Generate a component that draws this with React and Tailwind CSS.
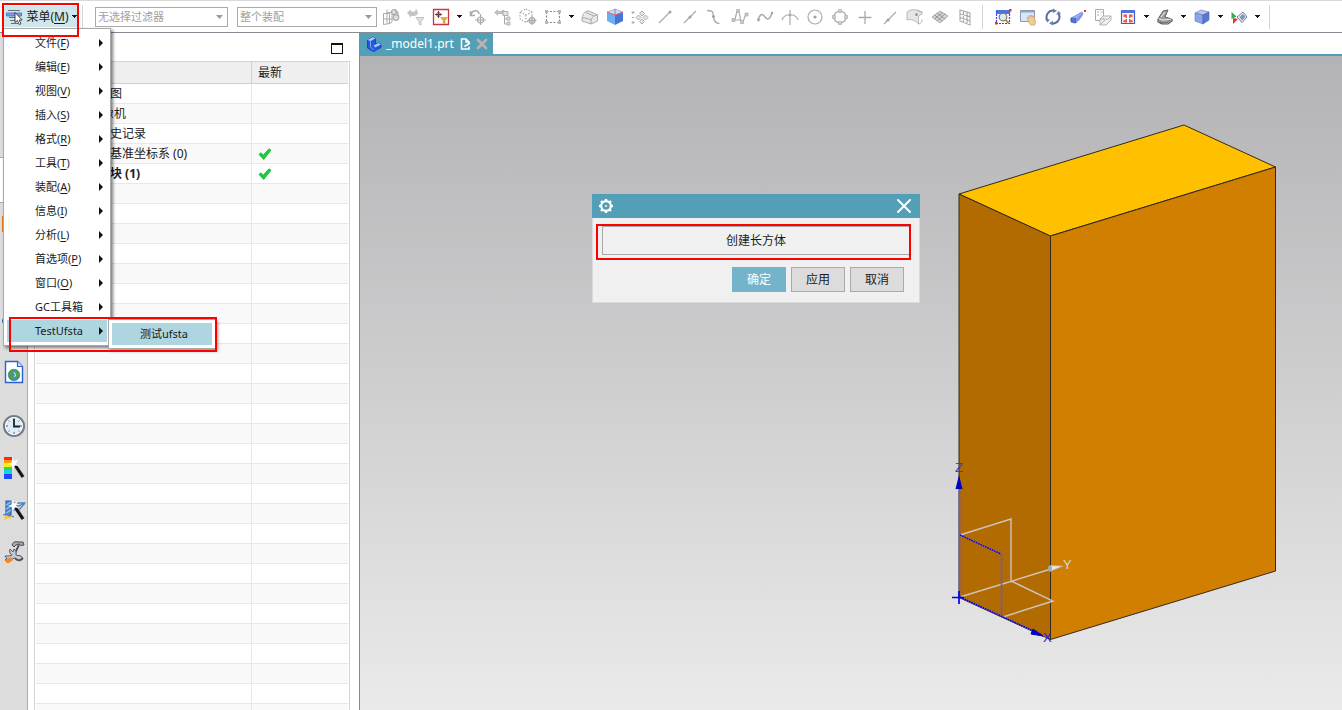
import { useState } from "react";
import { X } from "lucide-react";

const menuItems = [
  { label: "文件", hotkey: "F" },
  { label: "编辑", hotkey: "E" },
  { label: "视图", hotkey: "V" },
  { label: "插入", hotkey: "S" },
  { label: "格式", hotkey: "R" },
  { label: "工具", hotkey: "T" },
  { label: "装配", hotkey: "A" },
  { label: "信息", hotkey: "I" },
  { label: "分析", hotkey: "L" },
  { label: "首选项", hotkey: "P" },
  { label: "窗口", hotkey: "O" },
  { label: "GC工具箱" },
  { label: "TestUfsta", submenu: ["测试ufsta"] },
];

const treeRows = [
  { name: "图", indent: "pl-[74px]" },
  { name: "像机", indent: "pl-[66px]" },
  { name: "史记录", indent: "pl-[74px]" },
  { name: "基准坐标系 (0)", indent: "pl-[74px]", latest: true },
  { name: "块 (1)", indent: "pl-[74px]", latest: true, bold: true },
];

const EMPTY_ROWS = 27;

const Icon = ({ children, className = "w-[18px] h-[18px]", box = "0 0 18 18" }) => (
  <svg viewBox={box} className={`shrink-0 ${className}`} fill="none" stroke="#aaaaaa" strokeWidth="1.2">
    {children}
  </svg>
);

const Caret = () => (
  <svg viewBox="0 0 6 3" className="w-[6px] h-[3px] shrink-0" shapeRendering="crispEdges">
    <path d="M0 0h6L3 3z" fill="#1a1a1a" />
  </svg>
);

const MenuIcon = () => (
  <Icon>
    <path d="M2 2.500h12M3 9.500h8M4 12.500h7M5 15.500h7" stroke="#6b6f73" />
    <path d="M.5 5h15v3H.5z" fill="#7fa0f0" stroke="#3c63cf" strokeWidth=".8" />
    <path d="M9 4.500v10l2.400-2 1.800 4 1.800-.8-1.800-3.700h3z" fill="#fff" stroke="#333" strokeWidth=".9" />
  </Icon>
);

const GridLinkIcon = () => (
  <Icon>
    <path d="M1.500 5.500h6v10l-6 1zM1.500 11h9M5 1.500v14M5 5l5-1v10l-3 2" strokeWidth="1" />
    <circle cx="12" cy="4" r="2.500" fill="#ddd" />
    <circle cx="14" cy="9.500" r="2.800" fill="#ddd" />
    <path d="M13 2l3 2.500v3" />
  </Icon>
);

const UndoFilterIcon = () => (
  <Icon>
    <path d="M0 4.500l4-3v2h4l1-3 2 4c0 2-2 3.500-4 3.500H4V10z" fill="#c4c4c4" stroke="none" />
    <path d="M9 9.500h8l-3 4V17l-2-1v-2.500z" fill="#e0e0e0" stroke="#c4c4c4" strokeWidth="1" />
  </Icon>
);

const SnapFilterIcon = () => (
  <Icon>
    <path d="M1.500 1.500h15v15h-15z" fill="#fff" stroke="#c8344a" strokeWidth="1.300" />
    <path d="M6.500 3v7M3 6.500h7" stroke="#444" strokeWidth="1" />
    <circle cx="6.500" cy="6.500" r="2" stroke="#a33" strokeWidth=".9" />
    <path d="M8.500 9.500h7l-2.500 3V16l-1.800-1v-2.500z" fill="#f0a62d" stroke="#d58a1b" strokeWidth=".5" />
  </Icon>
);

const RotatePointIcon = () => (
  <Icon>
    <path d="M1.500 3v4.500H6M2 7C3 2 9.500 1 10 6" strokeWidth="1.600" />
    <path d="M11.500 6v11M6 12h11" />
    <circle cx="11.500" cy="12" r="3" />
  </Icon>
);

const TreeIcon = () => (
  <Icon>
    <path d="M0 4.500l4-3.500v2h3l2-1.500L12 4v3H8V6H4v2z" fill="#c0c0c0" stroke="none" />
    <path d="M10.500 8v8h3M10.500 11h3" strokeWidth="1" />
    <path d="M9 3.500h5v4H9zM13 9h3v3h-3zM13 14h3v3h-3z" fill="#e3e3e3" strokeWidth=".9" />
  </Icon>
);

const HexPointIcon = () => (
  <Icon>
    <path d="M7 1l6 3v7l-6 3.500L1 11V4zM1 4l6 3 6-3M7 7v7" stroke="#949494" strokeDasharray="1.500 1.500" strokeWidth="1" />
    <circle cx="13" cy="12.500" r="3" fill="#ddd" />
    <path d="M13 8v9M8.500 12.500h9" />
  </Icon>
);

const RectSelectIcon = () => (
  <Icon>
    <path d="M2.500 3.500h13v11h-13z" stroke="#888" strokeDasharray="2 1.500" />
    <path d="M1 2h3v3H1zM14 2h3v3h-3zM1 13h3v3H1zM14 13h3v3h-3z" fill="#b8b8b8" stroke="none" />
  </Icon>
);

const RoundedBodyIcon = () => (
  <Icon>
    <path d="M1 10c1-5 4-7.500 7-7l8.500 4v6L10 16l-9-3z" fill="#e9e9e9" strokeWidth="1" />
    <path d="M10 16v-4c1-3 3-4.500 6.500-5M1 10c3-.5 7 1 9 2M5 4.500L13 8" strokeWidth="1" />
  </Icon>
);

const SolidCubeIcon = () => (
  <Icon>
    <path d="M1 4l8-3 8 3-8 3z" fill="#c5ddf7" stroke="#7b9bd4" strokeWidth=".6" />
    <path d="M1 4l8 3v10l-8-4z" fill="#68b0ef" stroke="none" />
    <path d="M9 7l8-3v9l-8 4z" fill="#4a74d6" stroke="none" />
    <path d="M1 4l8 3 8-3M9 7V1" stroke="#d96b7c" strokeWidth="1" />
  </Icon>
);

const DiamondsIcon = () => (
  <Icon>
    <path d="M11 3l2.500 2.500L11 8 8.500 5.500zM11 11l2.500 2.500L11 16l-2.500-2.500zM5 9.500L7.500 7 10 9.500 7.500 12zM12 9.500L14.500 7 17 9.500 14.500 12z" strokeWidth="1" fill="#e8e8e8" />
    <path d="M2 3v3M.5 4.500h3M2 13v3M.5 14.500h3M1 9.500h2" strokeWidth="1" />
  </Icon>
);

const LineEndIcon = () => (
  <Icon>
    <path d="M3 15L14 4" />
    <circle cx="14" cy="4" r="1.500" fill="#a3a3a3" stroke="none" />
  </Icon>
);

const LineMidIcon = () => (
  <Icon>
    <path d="M3 15L15 3" />
    <circle cx="9" cy="9" r="1.500" fill="#a3a3a3" stroke="none" />
  </Icon>
);

const TangentIcon = () => (
  <Icon>
    <path d="M1 2.500c8 0 5.500 3 6.500 7 .8 4 2 6 6 6" strokeWidth="1.300" />
    <circle cx="7.500" cy="8.500" r="1.500" fill="#a3a3a3" stroke="none" />
  </Icon>
);

const SplineIcon = () => (
  <Icon>
    <path d="M2.500 12c3 0 2-9 4.500-9s1.500 11 4 11 2-7 4.500-7.500M2.500 12h7" />
    <path d="M1 10.500h3v3H1zM5.500 1.500h3v3h-3zM9.500 12.500h3v3h-3zM14 5h3v3h-3z" fill="#c8c8c8" strokeWidth=".7" />
  </Icon>
);

const WaveIcon = () => (
  <Icon>
    <path d="M2 12c2-6 4-7 7-3s5 2 7-4" strokeWidth="1.500" />
    <circle cx="2.500" cy="12" r="1.400" fill="#a3a3a3" stroke="none" />
    <circle cx="16" cy="5" r="1.200" fill="#a3a3a3" stroke="none" />
  </Icon>
);

const ArcCrossIcon = () => (
  <Icon>
    <path d="M1 12c2-7 14-7 16 0M9 2v15" />
    <circle cx="9" cy="7" r="1.300" fill="#a3a3a3" stroke="none" />
  </Icon>
);

const CenterIcon = () => (
  <Icon>
    <circle cx="9" cy="9" r="7" />
    <circle cx="9" cy="9" r="1.600" fill="#a3a3a3" stroke="none" />
  </Icon>
);

const QuadrantIcon = () => (
  <Icon>
    <circle cx="9" cy="9" r="6" />
    <path d="M7.500 1.500h3v3h-3zM7.500 13.500h3v3h-3zM1.500 7.500h3v3h-3zM13.500 7.500h3v3h-3z" fill="#d0d0d0" strokeWidth=".7" />
  </Icon>
);

const PlusIcon = () => (
  <Icon>
    <path d="M9 3v13M2.500 9.500h13" strokeWidth="1.300" />
  </Icon>
);

const LinePointIcon = () => (
  <Icon>
    <path d="M3 16L15 4" />
    <circle cx="7" cy="12" r="1.600" fill="#a3a3a3" stroke="none" />
  </Icon>
);

const FaceIcon = () => (
  <Icon>
    <path d="M1 4c4-3 8-2 10-2l5 2v2c-3 1-4 3-3.500 6v4C9 12 5 11 1 12z" fill="#e6e6e6" strokeWidth=".8" />
    <path d="M11 2c2 2 3 2 5 2M12.500 16c3 0 3.500-3 3.500-5" strokeWidth=".8" />
    <circle cx="10.500" cy="6.500" r="1.500" fill="#999" stroke="none" />
  </Icon>
);

const MeshIcon = () => (
  <Icon>
    <path d="M1 9l8-6 8 5-8 7z" fill="#d6d6d6" strokeWidth="1" />
    <path d="M3.500 7l8 6M6 5l8 6M3.500 11l8-6.500M6 13l8-7" stroke="#969696" strokeWidth="1" />
  </Icon>
);

const SlantGridIcon = () => (
  <Icon>
    <path d="M4 2l10 3v12L4 13zM7.500 3v11.500M11 4v12M4 5.800l10 3M4 9.500l10 3.500" strokeWidth="1.100" />
  </Icon>
);

const ZoomWindowIcon = () => (
  <Icon>
    <path d="M2 2h14v4H2z" fill="#4f74d9" stroke="none" />
    <path d="M2.500 3v12.500h13V4" stroke="#3347ff" strokeDasharray="2 1" />
    <circle cx="9" cy="9" r="3.800" fill="#dceaf2" stroke="#777" />
    <path d="M11.500 12l3.500 3.500" stroke="#b98a42" strokeWidth="2" />
    <path d="M1 14h2.500v2.500H1zM15 1h2.500v2.500H15z" fill="#e02f37" stroke="none" />
  </Icon>
);

const PanIcon = () => (
  <Icon>
    <path d="M1.500 2.500h14v11h-14z" fill="#dbe6f5" stroke="#8b97ad" strokeWidth="1" />
    <path d="M2 3h13v1.500H2z" fill="#8ca4dc" stroke="none" />
    <path d="M8 9l2 1 .3-3 1.500 2 1-2 .8 2 1.500-1 .5 3 1 3-1 3h-4l-2-3z" fill="#efcb98" stroke="#c59e66" strokeWidth=".7" />
  </Icon>
);

const RotateIcon = () => (
  <Icon>
    <path d="M3.500 12.500A6.500 6.500 0 0 1 10 2.700M14.500 5.500A6.500 6.500 0 0 1 8 15.300" stroke="#5a6ca2" strokeWidth="2" />
    <path d="M9 .5l4 2.500-4 2zM9 12.800l-4 2.500 4 2.200zM1 11l5 .5-2.500 3zM12 6.500l2.500-3.500 2.500 3z" fill="#6a7eb4" stroke="none" />
  </Icon>
);

const PerspectiveIcon = () => (
  <Icon>
    <path d="M2 10l4-2 7-4 1 2-4 6-4 3-4-1z" fill="#9db2f2" stroke="#5f79cc" strokeWidth=".7" />
    <path d="M2 10l5 .5v4.500l-5-1.500z" fill="#5674d2" stroke="#3f5ab4" strokeWidth=".7" />
    <path d="M7 10.500L13.500 5v2L7 15z" fill="#7d98e6" stroke="none" />
    <path d="M15 2h2v2h-2z" fill="#e02f37" stroke="none" />
  </Icon>
);

const SheetIcon = () => (
  <Icon>
    <path d="M1.500 1.500h8v11h-8zM3 4h2M6.500 4h2M3 7h2M6.500 7h1" strokeWidth="1" />
    <path d="M6 11l3-3h8l-3 3zM6 11v6h6l5-5V8M6 17l5-5" fill="#eee" strokeWidth=".9" />
  </Icon>
);

const FitIcon = () => (
  <Icon>
    <path d="M2.500 2.500h13v13h-13z" fill="#f4f7ff" stroke="#4460bd" />
    <path d="M2 2h14v3H2z" fill="#4f74d9" stroke="none" />
    <path d="M4.500 6.500H8V10H7L5.500 8.500l-1 1zM10 6.500h3.500v3l-1-1L11 10h-1zM4.500 14.500v-3l1 1L7 11h1v3.500zM13.500 14.500v-3l-1 1L11 11h-1v3.500z" fill="#ee5440" stroke="none" />
  </Icon>
);

const SectionIcon = () => (
  <Icon>
    <path d="M2 11L7 3l5-1-3 7 7 2-5 4H5z" fill="#9a9f9f" stroke="#555" strokeWidth=".9" />
    <path d="M2 11l5 1 9-1M5 9l4-5" stroke="#eee" strokeWidth="1" />
    <path d="M2 11v3l4 2h6l4-3v-2" stroke="#555" />
  </Icon>
);

const ShadedCubeIcon = () => (
  <Icon>
    <path d="M2 5l6-3 8 2-6 3z" fill="#b8c9f6" stroke="#6074b8" strokeWidth=".6" />
    <path d="M2 5l8 2v9l-8-3z" fill="#8ba4ec" stroke="#6074b8" strokeWidth=".6" />
    <path d="M10 7l6-3v8l-6 4z" fill="#5a78ce" stroke="#4c62aa" strokeWidth=".6" />
  </Icon>
);

const OrientIcon = () => (
  <Icon>
    <path d="M1.500 4l5 4.500-5 2.500z" fill="#2bb24c" stroke="none" />
    <path d="M3 10l5 1-5 5z" fill="#e2372f" stroke="none" />
    <path d="M7 9l6-5 4 5-5 5.500z" fill="#e3e8f2" stroke="#68779a" strokeWidth=".9" />
    <path d="M13 6l2.500 3-3.500 3.500L9.500 9z" fill="#8195bb" stroke="none" />
  </Icon>
);

const snapTools = [
  { name: "关联", icon: GridLinkIcon },
  { name: "重置过滤器", icon: UndoFilterIcon },
  { name: "捕捉过滤器", icon: SnapFilterIcon, caret: true },
  { name: "旋转点", icon: RotatePointIcon },
  { name: "结构", icon: TreeIcon },
  { name: "高亮", icon: HexPointIcon },
  { name: "矩形选择", icon: RectSelectIcon, caret: true },
  { name: "圆角体", icon: RoundedBodyIcon },
  { name: "实体", icon: SolidCubeIcon },
  { name: "捕捉点", icon: DiamondsIcon },
  { name: "端点", icon: LineEndIcon },
  { name: "中点", icon: LineMidIcon },
  { name: "相切", icon: TangentIcon },
  { name: "控制点", icon: SplineIcon },
  { name: "极点", icon: WaveIcon },
  { name: "交点", icon: ArcCrossIcon },
  { name: "圆心", icon: CenterIcon },
  { name: "象限点", icon: QuadrantIcon },
  { name: "现有点", icon: PlusIcon },
  { name: "曲线上的点", icon: LinePointIcon },
  { name: "面上的点", icon: FaceIcon },
  { name: "小平面", icon: MeshIcon },
  { name: "栅格", icon: SlantGridIcon },
];

const viewTools = [
  { name: "缩放", icon: ZoomWindowIcon },
  { name: "平移", icon: PanIcon },
  { name: "旋转", icon: RotateIcon },
  { name: "透视", icon: PerspectiveIcon },
  { name: "图纸", icon: SheetIcon },
  { name: "适合窗口", icon: FitIcon, caret: true },
  { name: "剖切", icon: SectionIcon, caret: true },
  { name: "着色", icon: ShadedCubeIcon, caret: true },
  { name: "定向视图", icon: OrientIcon, caret: true },
];

const ToolGroup = ({ tools }) => (
  <div className="flex items-center shrink-0">
    {tools.map((tool) => {
      const ToolIcon = tool.icon;

      return (
        <div key={tool.name} className="flex items-center">
          <button aria-label={tool.name} className="w-[25px] h-6 flex items-center justify-center">
            <ToolIcon />
          </button>
          {tool.caret && (
            <button aria-label={`${tool.name}选项`} className="w-3 h-6 flex items-center justify-center">
              <Caret />
            </button>
          )}
        </div>
      );
    })}
  </div>
);

const FilterSelect = ({ label, option, width }) => (
  <label className={`relative flex shrink-0 ${width}`}>
    <select
      aria-label={label}
      className="appearance-none w-full h-5 pl-[2px] pr-5 border border-[#ababab] bg-white text-[11px] leading-4 text-[#a0a0a0] outline-none"
    >
      <option>{option}</option>
    </select>
    <span className="absolute right-[5px] top-2 pointer-events-none">
      <svg viewBox="0 0 7 4" className="w-[7px] h-1">
        <path d="M0 0h7L3.500 4z" fill="#9a9a9a" />
      </svg>
    </span>
  </label>
);

const Divider = () => <div className="w-px h-6 shrink-0 bg-[#d4d4d4]" />;

const MainMenu = () => (
  <ul className="absolute left-[3px] top-7 z-20 w-[108px] py-[2px] px-[3px] bg-white border border-[#a9a9a9] shadow-[2px_2px_3px_rgba(0,0,0,0.5)] text-[11px]">
    {menuItems.map((item) => (
      <li key={item.label} className="relative py-px">
        <button
          className={`w-full h-[22px] pl-7 pr-1 flex items-center justify-between whitespace-nowrap ${
            item.submenu ? "bg-[#aed6e1]" : ""
          }`}
        >
          <span>
            {item.label}
            {item.hotkey && (
              <>
                (<u className="underline-offset-2">{item.hotkey}</u>)
              </>
            )}
          </span>
          <svg viewBox="0 0 4 8" className="w-1 h-2">
            <path d="M0 0l4 4-4 4z" fill="#111" />
          </svg>
        </button>

        {item.submenu && (
          <>
            <ul className="absolute left-[101px] top-0 w-[108px] p-[3px] bg-white border border-[#a9a9a9] shadow-[2px_2px_3px_rgba(0,0,0,0.4)]">
              {item.submenu.map((entry) => (
                <li key={entry}>
                  <button className="w-full h-[22px] pl-7 text-left bg-[#aed6e1]">{entry}</button>
                </li>
              ))}
            </ul>
            <div className="absolute left-[2px] -top-[2px] w-[208px] h-[35px] border-2 border-[#f00] pointer-events-none" />
          </>
        )}
      </li>
    ))}
  </ul>
);

const Toolbar = () => (
  <header className="relative h-[33px] shrink-0 flex items-center border-t border-t-[#d9d9d9] border-b border-b-[#858c94] bg-white">
    <div className="relative ml-[3px] shrink-0">
      <button className="w-[75px] h-[21px] pl-[3px] pr-[1px] flex items-center justify-between bg-[#cfe6eb] text-[12px]">
        <MenuIcon />
        <span className="whitespace-nowrap">
          菜单(<u className="underline-offset-2">M</u>)
        </span>
        <Caret />
      </button>
      <div className="absolute -left-px -top-[3px] z-30 w-[77px] h-[34px] border-2 border-[#f00] pointer-events-none" />
    </div>
    <div className="ml-1 mr-3 flex">
      <Divider />
    </div>
    <FilterSelect label="类型过滤器" option="无选择过滤器" width="w-[133px]" />
    <div className="w-[9px] shrink-0" />
    <FilterSelect label="选择范围" option="整个装配" width="w-[140px]" />
    <div className="pl-px">
      <ToolGroup tools={snapTools} />
    </div>
    <div className="ml-[5px] mr-[7px]">
      <Divider />
    </div>
    <ToolGroup tools={viewTools} />
    <div className="ml-[6px]">
      <Divider />
    </div>
  </header>
);

const WebPageIcon = () => (
  <Icon className="w-6 h-6" box="0 0 24 24">
    <path d="M3.500 1.500h12l5 5v16h-17z" fill="#fff" stroke="#2f62c8" strokeWidth="1.400" />
    <path d="M15.500 1.500v5h5" fill="#d5e4fb" stroke="#2f62c8" />
    <circle cx="12" cy="15" r="5.800" fill="#3f8fd0" stroke="#2b6eb0" strokeWidth=".6" />
    <path d="M7 12c2-3 5-3 5-1l-2 3 2 4-2 2c-3-1-4-5-3-8zM13 10c3 0 4.500 3 4 5l-2 4-2-2z" fill="#4fa23c" stroke="none" />
    <path d="M12 12l1.500 3-1 2" stroke="#e3f1fb" strokeWidth="1" />
  </Icon>
);

const ClockIcon = () => (
  <Icon className="w-6 h-6" box="0 0 24 24">
    <circle cx="12" cy="12" r="10" fill="#ddecf8" stroke="#777d84" strokeWidth="2.200" />
    <circle cx="12" cy="12" r="8.400" stroke="#fff" strokeWidth="1" />
    <path d="M12 4v2M12 18v2M4 12h2M18 12h2M6.500 6.500l1 1M17.500 6.500l-1 1M6.500 17.500l1-1M17.500 17.500l-1-1" stroke="#55606e" strokeWidth="1" />
    <path d="M12 5v7.500h6" stroke="#1c222b" strokeWidth="1.800" />
  </Icon>
);

const Wand = () => (
  <>
    <path d="M13 9l8 12" stroke="#999" strokeWidth="4" />
    <path d="M13 9l8 12" stroke="#111" strokeWidth="2.800" />
    <path d="M11 1l1 4.500L16 3l-2 4.500 2.500 2.500-3.500-.5-2.500 4-.5-4.500L6 8l3.500-1.500z" fill="#fff" stroke="none" />
  </>
);

const PaletteIcon = () => (
  <Icon className="w-6 h-6" box="0 0 24 24">
    <g stroke="none">
      <path d="M2 1h8v4H2z" fill="#ff2618" />
      <path d="M2 4h8v4H2z" fill="#ff9a00" />
      <path d="M2 7h8v4H2z" fill="#f5ee17" />
      <path d="M2 11h8v4H2z" fill="#31dc37" />
      <path d="M2 14h8v4H2z" fill="#17cfe6" />
      <path d="M2 18h8v5H2z" fill="#1d49ff" />
    </g>
    <Wand />
  </Icon>
);

const ModelWandIcon = () => (
  <Icon className="w-6 h-6" box="0 0 24 24">
    <path d="M4 3h5v15H4z" fill="#4b87d1" stroke="#2e62a8" />
    <path d="M4 7l5-3M4 11l5-3M4 15l5-3" stroke="#9cc2f0" />
    <path d="M10 5h12l-5 3h-6M9 12h7M17 12l6-7" stroke="#5583bf" strokeWidth="1.300" />
    <path d="M1 17l3-1 8 3" stroke="#5583bf" strokeWidth="1.200" />
    <path d="M2 19l3-2 2 2 3-2-1 4-3-1-3 2z" fill="#f5c934" stroke="none" />
    <Wand />
  </Icon>
);

const ToolsIcon = () => (
  <Icon className="w-6 h-6" box="0 0 24 24">
    <path d="M10 5c1-3 3-4 6-3l5 0 1 3-3 .5-2-1.500-3 1-2 2z" fill="#a5a8ae" stroke="#3d3f44" strokeWidth=".9" />
    <path d="M17 5l-4 8" stroke="#4a4c50" strokeWidth="1.800" />
    <path d="M8 9c-1 3 0 5 2 6l-3 1-4 0 2 3-2 1 5 1 4-3 6 3 3-2-2-3-5-1 0-4-2-2-1 3z" fill="#c3c8d3" stroke="#555d6b" strokeWidth="1" />
    <path d="M13 18c2 3 5 3 8 0" stroke="#444a58" strokeWidth="1.600" />
    <path d="M4 19.500l5-2.500 2 3-4 3H4z" fill="#f28a1c" stroke="none" />
  </Icon>
);

const resourceTabs = [
  { name: "Web 浏览器", icon: WebPageIcon },
  { name: "历史记录", icon: ClockIcon },
  { name: "系统材料", icon: PaletteIcon },
  { name: "加工向导", icon: ModelWandIcon },
  { name: "角色", icon: ToolsIcon },
];

const ResourceBar = () => (
  <nav className="w-7 shrink-0 flex flex-col bg-[#dcdcdc] border-r border-[#ababab]">
    <div className="h-[124px] shrink-0" />
    <button aria-label="装配导航器" className="h-[46px] shrink-0 bg-white border-y border-[#ababab]" />
    <button aria-label="部件导航器" className="h-[42px] shrink-0 pl-[2px] flex items-center">
      <span className="w-3 h-4 bg-[#e3771e]" />
    </button>
    <button aria-label="重用库" className="h-[115px] shrink-0 pl-[2px] pb-9 flex items-end">
      <span className="w-2 h-[6px] rounded-full bg-[#2f62c8]" />
    </button>
    <div className="flex flex-col gap-[18px]">
      {resourceTabs.map((tab, index) => {
        const TabIcon = tab.icon;

        return (
          <button
            key={tab.name}
            aria-label={tab.name}
            className={`w-full h-6 flex items-center justify-center ${index === 0 ? "mb-3" : ""}`}
          >
            <TabIcon />
          </button>
        );
      })}
    </div>
  </nav>
);

const Check = () => (
  <svg viewBox="0 0 14 12" className="w-[14px] h-3">
    <path d="M1 6.500l2-1.800 2.200 2.500L11 .8l2 1.400-7.300 9.300z" fill="#17d03b" stroke="#0fa52e" strokeWidth=".7" />
  </svg>
);

const PartNavigator = () => (
  <aside className="w-[332px] shrink-0 pl-[6px] pr-[9px] flex flex-col bg-white border-r border-[#858c94]">
    <div className="h-7 shrink-0 flex items-center justify-end pr-[7px] pt-[3px]">
      <button aria-label="最大化" className="w-3 h-[11px] border border-t-2 border-[#111]" />
    </div>
    <div className="flex-1 min-h-0 overflow-hidden border border-[#d4d4d4] border-b-0 px-px">
      <table className="w-full table-fixed border-separate border-spacing-0 text-[12px] leading-4">
        <thead>
          <tr className="h-[22px] bg-[#efefef]">
            <th aria-label="名称" className="p-0 border-b border-r border-[#d0d0d0]" />
            <th className="w-24 p-0 pt-px pl-[6px] text-left font-normal border-b border-[#d0d0d0]">最新</th>
          </tr>
        </thead>
        <tbody>
          {treeRows.map((row) => (
            <tr key={row.name} className="h-5 even:bg-[#f9f9f9]">
              <td
                className={`p-0 border-b border-r border-[#e8e8e8] whitespace-nowrap ${row.indent} ${
                  row.bold ? "font-bold" : ""
                }`}
              >
                {row.name}
              </td>
              <td className="p-0 pl-[6px] border-b border-[#e8e8e8]">{row.latest && <Check />}</td>
            </tr>
          ))}
          {Array.from({ length: EMPTY_ROWS }, (_, i) => (
            <tr key={i} className="h-5 even:bg-[#f9f9f9]">
              <td className="p-0 border-b border-r border-[#e8e8e8]" />
              <td className="p-0 border-b border-[#e8e8e8]" />
            </tr>
          ))}
        </tbody>
      </table>
    </div>
  </aside>
);

const PartIcon = () => (
  <svg viewBox="0 0 16 16" className="w-4 h-4">
    <path d="M1.500 4l5-3 3 1.500V8l3-1 2.500 1.500v3l-7.500 4L1.500 12z" fill="#2457e0" stroke="#123aa8" strokeWidth=".8" />
    <path d="M1.500 4l5-3 3 1.500-5 2.500zM7.500 9.500l5-2.500 2.500 1.500-6 3z" fill="#a5c8ff" />
    <path d="M4.500 5v6l3 3" stroke="#7ea8ff" strokeWidth="1" fill="none" />
  </svg>
);

const FileTabs = () => (
  <div className="h-[23px] shrink-0 flex bg-white border-b-2 border-[#549fb8]">
    <div className="w-[133px] pl-[6px] flex items-center bg-[#549fb8] text-white">
      <PartIcon />
      <span className="ml-1 text-[12px] leading-4">_model1.prt</span>
      <svg viewBox="0 0 11 12" className="ml-[6px] w-[11px] h-3" fill="none" stroke="#fff" strokeWidth="1.500">
        <path d="M9 8.500V11H1.500V1H6l3 3v1" />
        <path d="M4.500 8.500L10 5M6 1v3h3" />
      </svg>
      <button aria-label="关闭" className="ml-[3px]">
        <X className="w-4 h-4 text-[#b9b4b2]" strokeWidth={4} />
      </button>
    </div>
  </div>
);

const BlockModel = () => (
  <svg viewBox="0 0 982 654" preserveAspectRatio="xMinYMin meet" className="w-full h-full" fill="none">
    <g stroke="#33291a" strokeWidth="1" strokeLinejoin="round">
      <path d="M599 138l225-69 91.500 42-225.500 69z" fill="#ffc000" />
      <path d="M599 138l91.500 42v403.500l-91.500-42z" fill="#b16b00" />
      <path d="M690.500 180l225-69v404l-225 68.500z" fill="#d17f00" />
    </g>

    {/* datum planes */}
    <path d="M600 479l51-16v62l42 20-50 16M600 541l91-28" stroke="#cfc3bd" strokeWidth="1.400" />
    <path d="M599.500 541V432M641.500 498v63" stroke="#6a58d0" strokeWidth="1.500" />
    <path d="M600 479l41 19M600 541l82 38" stroke="#6a58d0" strokeWidth="1.200" />
    <path d="M600 479l41 19M600 541l82 38" stroke="#0000e0" strokeWidth="1.400" strokeDasharray="1.500 1" />
    <path d="M592 541.500h12M599 535v13" stroke="#0000f0" strokeWidth="1.700" />

    {/* axis heads */}
    <path d="M599 419l-3.500 14h7z" fill="#0000c8" />
    <path d="M683 580l-12-2 2-5z" fill="#0000c8" stroke="#0000c8" />
    <path d="M703 510l-13-.5v6z" fill="#e6e6e6" stroke="#aaa" strokeWidth=".6" />
    <ellipse cx="690" cy="512.500" rx="2" ry="3" fill="#a8a8a8" />

    <g className="font-['Liberation_Sans',sans-serif]" fontSize="13">
      <text x="595" y="416" fill="#3c3cd8">Z</text>
      <text x="703" y="513" fill="#dcd6d2">Y</text>
      <text x="683" y="586" fill="#2222ee">X</text>
    </g>
  </svg>
);

const GearIcon = () => (
  <svg viewBox="0 0 16 16" className="w-4 h-4" fill="none" stroke="#fff">
    <circle cx="8" cy="8" r="4.800" strokeWidth="2.200" />
    <path d="M8 1v3M8 12v3M1 8h3M12 8h3M3 3l2 2M11 11l2 2M13 3l-2 2M5 11l-2 2" strokeWidth="2.400" />
    <circle cx="8" cy="8" r="1" fill="#fff" stroke="none" />
  </svg>
);

const BlockDialog = ({ onClose }) => (
  <section
    role="dialog"
    aria-label="创建长方体"
    className="absolute left-[232px] top-[138px] w-[328px] bg-[#f0f0f0] text-[12px] leading-4 flex flex-col"
  >
    <div className="h-6 pl-[6px] pr-1 flex items-center justify-between bg-[#549fb8] text-white">
      <GearIcon />
      <button aria-label="关闭" onClick={onClose}>
        <X className="w-6 h-6" strokeWidth={2} />
      </button>
    </div>
    <div className="pt-[6px] pl-[3px] pr-2 pb-[10px] border border-t-0 border-[#dadada]">
      <div className="border-2 border-[#f00] pl-1 pb-[3px]">
        <button className="w-full h-[29px] border border-[#a9a9a9] border-r-0">创建长方体</button>
      </div>
      <div className="mt-[7px] mr-[7px] flex justify-end gap-[5px]">
        <button className="w-[54px] h-[25px] bg-[#74b4ca] text-white" onClick={onClose}>
          确定
        </button>
        <button className="w-[54px] h-[25px] bg-[#dcdcdc] border border-[#a9a9a9]">应用</button>
        <button className="w-[54px] h-[25px] bg-[#dcdcdc] border border-[#a9a9a9]" onClick={onClose}>
          取消
        </button>
      </div>
    </div>
  </section>
);

const App = () => {
  const [dialogOpen, setDialogOpen] = useState(true);

  return (
    <div className="relative h-screen overflow-hidden flex flex-col bg-white text-[#1a1a1a] font-['Noto_Sans','Noto_Sans_CJK_SC',sans-serif]">
      <Toolbar />
      <MainMenu />

      <div className="flex-1 min-h-0 flex">
        <ResourceBar />
        <PartNavigator />

        <main className="flex-1 min-w-0 flex flex-col">
          <FileTabs />
          <div className="relative flex-1 min-h-0 bg-linear-to-b from-[#b3b3b5] to-[#eaeaeb]">
            <BlockModel />
            {dialogOpen && <BlockDialog onClose={() => setDialogOpen(false)} />}
          </div>
        </main>
      </div>
    </div>
  );
};

export default App;
